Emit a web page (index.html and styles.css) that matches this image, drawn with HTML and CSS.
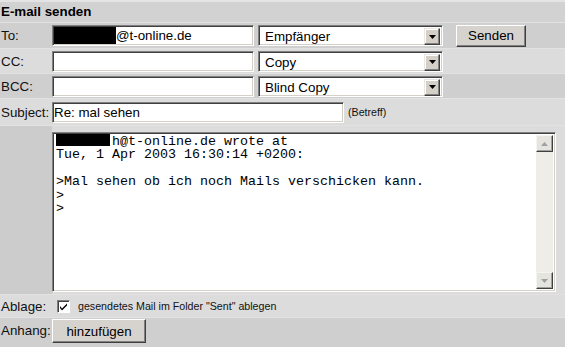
FILE: index.html
```html
<!DOCTYPE html>
<html lang="de">
<head>
<meta charset="UTF-8">
<title>E-mail senden</title>
<link rel="stylesheet" href="styles.css">
</head>
<body>
<form class="mailform">
    <div class="head">E-mail senden</div>

    <div class="row dark to">
        <div class="label">To:</div>
        <div class="cell">
            <div class="field wide"><span class="redact"></span>@t-online.de</div>
            <div class="select"><span class="select-text">Empf&auml;nger</span><span class="select-btn"><svg width="7" height="4" viewBox="0 0 7 4"><path d="M0 0h7L3.5 4z" fill="#000"/></svg></span></div>
            <button type="button" class="btn send">Senden</button>
        </div>
    </div>

    <div class="row light">
        <div class="label">CC:</div>
        <div class="cell">
            <input type="text" class="field wide" value="">
            <div class="select"><span class="select-text">Copy</span><span class="select-btn"><svg width="7" height="4" viewBox="0 0 7 4"><path d="M0 0h7L3.5 4z" fill="#000"/></svg></span></div>
        </div>
    </div>

    <div class="row dark">
        <div class="label">BCC:</div>
        <div class="cell">
            <input type="text" class="field wide" value="">
            <div class="select"><span class="select-text">Blind Copy</span><span class="select-btn"><svg width="7" height="4" viewBox="0 0 7 4"><path d="M0 0h7L3.5 4z" fill="#000"/></svg></span></div>
        </div>
    </div>

    <div class="row light subject">
        <div class="label">Subject:</div>
        <div class="cell">
            <input type="text" class="field subj" value="Re: mal sehen">
            <span class="hint">(Betreff)</span>
        </div>
    </div>

    <div class="row body-row">
        <div class="label"></div>
        <div class="cell">
            <div class="textarea">
                <div class="text"><span class="redact-mono"></span>h@t-online.de wrote at
Tue, 1 Apr 2003 16:30:14 +0200:

&gt;Mal sehen ob ich noch Mails verschicken kann.
&gt;
&gt;</div>
                <div class="scrollbar">
                    <span class="sb-btn"><svg width="7" height="4" viewBox="0 0 7 4"><path d="M0 4h7L3.5 0z" fill="#a0a0a0"/></svg></span>
                    <span class="sb-track"></span>
                    <span class="sb-btn"><svg width="7" height="4" viewBox="0 0 7 4"><path d="M0 0h7L3.5 4z" fill="#a0a0a0"/></svg></span>
                </div>
            </div>
        </div>
    </div>

    <div class="row light ablage">
        <div class="label">Ablage:</div>
        <div class="cell">
            <span class="check"><svg width="9" height="9" viewBox="0 0 9 9"><path d="M1 4l2 2.5L8 1.5v2L3 8.5 1 6z" fill="#000"/></svg></span>
            <span class="hint">gesendetes Mail im Folder "Sent" ablegen</span>
        </div>
    </div>

    <div class="row dark anhang">
        <div class="label">Anhang:</div>
        <div class="cell">
            <button type="button" class="btn attach">hinzuf&uuml;gen</button>
        </div>
    </div>
</form>
</body>
</html>
```

FILE: styles.css
```css
body {
    margin: 0;
    background-color: #cdcdcd;
    font-family: "Liberation Sans", Arial, sans-serif;
    font-size: 13.33px;
    color: #000;
}

.mailform {
    margin: 0;
}

.head {
    height: 22px;
    line-height: 20px;
    padding-left: 1px;
    font-weight: bold;
    background-color: #d2d2d2;
    border-top: 2px solid #e4e4e4;
    box-sizing: border-box;
}

.row {
    display: flex;
    align-items: center;
    height: 25px;
    box-sizing: border-box;
    border-top: 1px solid #e2e2e2;
}

.to {
    height: 26px;
}

.dark {
    background-color: #cfcfcf;
}

.light {
    background-color: #dcdcdc;
}

.label {
    width: 52px;
    flex-shrink: 0;
    padding-left: 1px;
    box-sizing: border-box;
    color: #111;
}

.cell {
    display: flex;
    align-items: center;
    flex: 1;
}

.field {
    height: 21px;
    margin: 0;
    padding: 0 1px;
    box-sizing: border-box;
    border-top: 1px solid #808080;
    border-left: 1px solid #808080;
    border-right: 1px solid #ffffff;
    border-bottom: 1px solid #ffffff;
    box-shadow: inset 1px 1px 0 #404040, inset -1px -1px 0 #d4d0c8;
    background-color: #fff;
    font-family: "Liberation Sans", Arial, sans-serif;
    font-size: 13.33px;
    line-height: 19px;
    color: #000;
    outline: none;
    display: flex;
    align-items: center;
}

.wide {
    width: 202px;
}

.subj {
    width: 292px;
}

.redact {
    display: inline-block;
    width: 62px;
    height: 17px;
    background-color: #000;
}

.select {
    display: flex;
    width: 185px;
    height: 21px;
    margin-left: 4px;
    box-sizing: border-box;
    border-top: 1px solid #808080;
    border-left: 1px solid #808080;
    border-right: 1px solid #ffffff;
    border-bottom: 1px solid #ffffff;
    box-shadow: inset 1px 1px 0 #404040, inset -1px -1px 0 #d4d0c8;
    background-color: #fff;
    padding: 2px;
}

.select-text {
    flex: 1;
    padding-left: 4px;
    line-height: 17px;
}

.select-btn {
    width: 16px;
    height: 17px;
    box-sizing: border-box;
    background-color: #d4d0c8;
    border-top: 1px solid #e8e6e0;
    border-left: 1px solid #e8e6e0;
    border-right: 1px solid #404040;
    border-bottom: 1px solid #404040;
    box-shadow: inset -1px -1px 0 #808080, inset 1px 1px 0 #ffffff;
    display: flex;
    align-items: center;
    justify-content: center;
}

.btn {
    height: 22px;
    padding: 0;
    box-sizing: border-box;
    background-color: #d6d3ce;
    border-top: 1px solid #ffffff;
    border-left: 1px solid #ffffff;
    border-right: 1px solid #404040;
    border-bottom: 1px solid #404040;
    box-shadow: inset -1px -1px 0 #808080;
    font-family: "Liberation Sans", Arial, sans-serif;
    font-size: 13.33px;
    color: #000;
    cursor: pointer;
}

.send {
    width: 70px;
    margin-left: 13px;
}

.attach {
    width: 94px;
    height: 24px;
}

.hint {
    font-size: 10.67px;
    margin-left: 4px;
    color: #111;
}

.subject {
    height: 27px;
}

.body-row {
    height: 169px;
    align-items: stretch;
}

.body-row .label {
    background-color: #cccccc;
}

.body-row .cell {
    background-color: #dcdcdc;
    align-items: flex-start;
    padding-top: 6px;
}

.textarea {
    display: flex;
    width: 504px;
    height: 160px;
    box-sizing: border-box;
    border-top: 1px solid #808080;
    border-left: 1px solid #808080;
    border-right: 1px solid #ffffff;
    border-bottom: 1px solid #ffffff;
    box-shadow: inset 1px 1px 0 #404040, inset -1px -1px 0 #d4d0c8;
    background-color: #fff;
    padding: 2px;
}

.text {
    flex: 1;
    padding: 0 1px;
    margin-top: -1px;
    font-family: "Liberation Mono", "Courier New", monospace;
    font-size: 13.33px;
    line-height: 13.4px;
    white-space: pre;
    overflow: hidden;
}

.redact-mono {
    display: inline-block;
    width: 54px;
    height: 12px;
    margin-right: 2px;
    vertical-align: -1px;
    background-color: #000;
}

.scrollbar {
    display: flex;
    flex-direction: column;
    width: 17px;
    background-color: #eeede8;
}

.sb-btn {
    height: 17px;
    box-sizing: border-box;
    background-color: #e6e4de;
    border-top: 1px solid #f4f4f0;
    border-left: 1px solid #f4f4f0;
    border-right: 1px solid #404040;
    border-bottom: 1px solid #404040;
    box-shadow: inset -1px -1px 0 #a0a0a0;
    display: flex;
    align-items: center;
    justify-content: center;
}

.sb-track {
    flex: 1;
}

.ablage {
    height: 23px;
}

.check {
    width: 13px;
    height: 13px;
    margin-left: 5px;
    box-sizing: border-box;
    border-top: 1px solid #808080;
    border-left: 1px solid #808080;
    border-right: 1px solid #ffffff;
    border-bottom: 1px solid #ffffff;
    box-shadow: inset 1px 1px 0 #404040;
    background-color: #fff;
    display: flex;
    align-items: center;
    justify-content: center;
}

.ablage .hint {
    margin-left: 8px;
}

.anhang {
    height: 30px;
    align-items: flex-start;
    padding-top: 1px;
}

.anhang .label {
    line-height: 24px;
}
```
